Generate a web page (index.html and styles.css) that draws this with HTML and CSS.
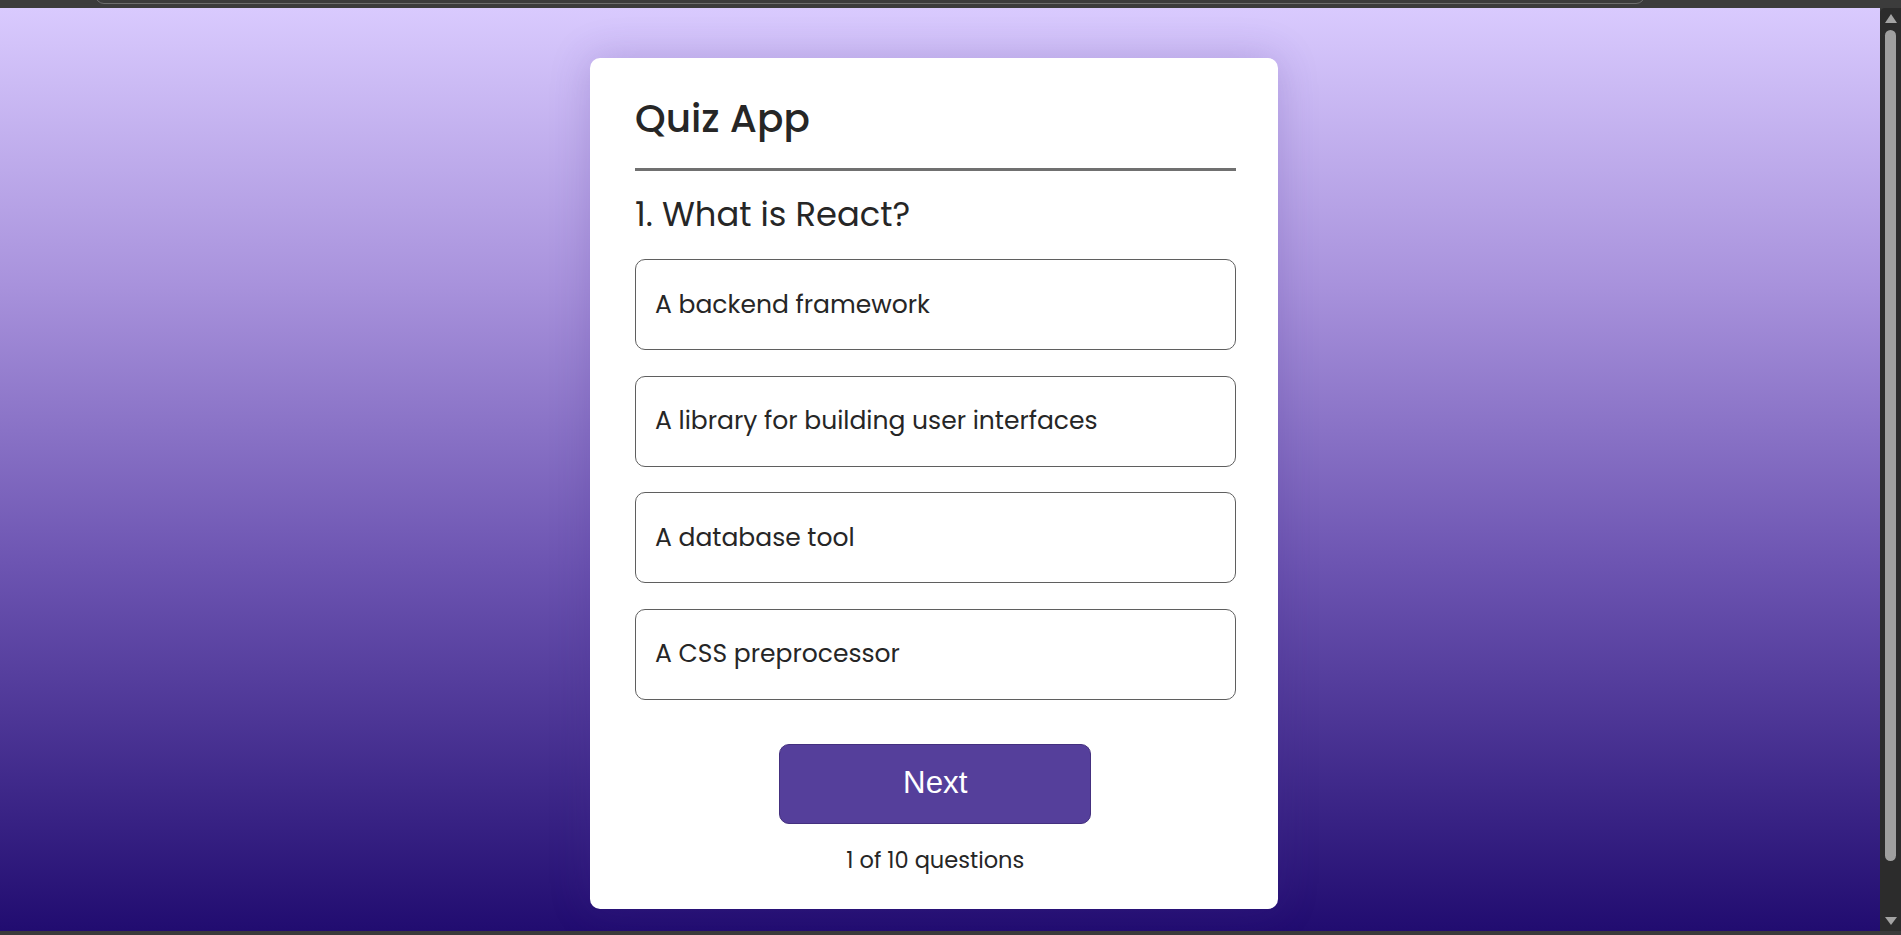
FILE: index.html
```html
<!DOCTYPE html>
<html lang="en">
<head>
<meta charset="utf-8">
<title>Quiz App</title>
<link rel="stylesheet" href="styles.css">
</head>
<body>
  <div class="chrome-top"><div class="urlbar"></div></div>
  <div class="viewport">
    <main class="page">
      <div class="card">
        <h1 class="title">Quiz App</h1>
        <hr class="rule">
        <h2 class="question">1. What is React?</h2>
        <ul class="options">
          <li class="option">A backend framework</li>
          <li class="option">A library for building user interfaces</li>
          <li class="option">A database tool</li>
          <li class="option">A CSS preprocessor</li>
        </ul>
        <button class="next">Next</button>
        <div class="index">1 of 10 questions</div>
      </div>
    </main>
    <div class="scrollbar">
      <span class="arrow-up"></span>
      <span class="thumb"></span>
      <span class="arrow-down"></span>
    </div>
  </div>
  <div class="chrome-bottom"></div>
</body>
</html>
```
FILE: styles.css
```css
html, body {
  margin: 0;
  padding: 0;
  height: 935px;
  overflow: hidden;
}
body {
  display: flex;
  flex-direction: column;
  background: #3a3a3a;
  font-family: "Poppins", "Open Sans", sans-serif;
  color: #262626;
}
.chrome-top {
  height: 8px;
  flex: 0 0 8px;
  background: #3c3c3c;
  overflow: hidden;
}
.urlbar {
  height: 9px;
  margin: -7px 256px 0 95px;
  border: 1px solid #6e6e6e;
  border-radius: 0 0 9px 9px;
}
.viewport {
  flex: 1 1 auto;
  display: flex;
  min-height: 0;
}
.page {
  flex: 1 1 auto;
  display: flex;
  justify-content: center;
  align-items: flex-start;
  padding: 50px 12px 0 0;
  background: linear-gradient(#d9cafe 0%, #a892dc 30%, #6d55b2 60%, #210c70 100%);
}
.card {
  width: 688px;
  box-sizing: border-box;
  padding: 31.25px 42.5px 31.25px 45px;
  background: #fff;
  border-radius: 10px;
  display: flex;
  flex-direction: column;
  gap: 18.75px;
  box-shadow: 0 0 40px rgba(70, 40, 140, 0.22);
}
.title {
  margin: 0;
  font-size: 39px;
  line-height: 60px;
  font-weight: 500;
}
.rule {
  margin: 0;
  border: none;
  height: 2.5px;
  background: #707070;
}
.question {
  margin: 0;
  font-size: 33.75px;
  line-height: 51px;
  font-weight: 400;
}
.options {
  margin: 0;
  padding: 0;
  list-style: none;
}
.option {
  height: 91px;
  box-sizing: border-box;
  display: flex;
  align-items: center;
  padding-left: 19px;
  border: 1.5px solid #5f5f5f;
  border-radius: 10px;
  margin-bottom: 25.5px;
  font-size: 25px;
}
.next {
  align-self: center;
  width: 312px;
  height: 80px;
  background: #553f9b;
  color: #fff;
  border: 1px solid #44307f;
  border-radius: 10px;
  font-family: "Liberation Sans", Arial, sans-serif;
  font-size: 31.25px;
  padding: 0 0 2px;
}
.index {
  text-align: center;
  font-size: 22.5px;
  line-height: 33.75px;
  padding-top: 1px;
}
.scrollbar {
  flex: 0 0 21px;
  width: 21px;
  background: #2c2c2c;
  border-top-left-radius: 5px;
  display: flex;
  flex-direction: column;
  align-items: center;
}
.arrow-up {
  margin-top: 6px;
  width: 0;
  height: 0;
  border-left: 6px solid transparent;
  border-right: 6px solid transparent;
  border-bottom: 9px solid #a3a3a3;
}
.thumb {
  margin-top: 7px;
  width: 11px;
  height: 831px;
  border-radius: 6px;
  background: #9f9f9f;
}
.arrow-down {
  margin-top: 56px;
  width: 0;
  height: 0;
  border-left: 6px solid transparent;
  border-right: 6px solid transparent;
  border-top: 8px solid #a3a3a3;
}
.chrome-bottom {
  height: 4px;
  flex: 0 0 4px;
  background: #3a3a3a;
}
```
